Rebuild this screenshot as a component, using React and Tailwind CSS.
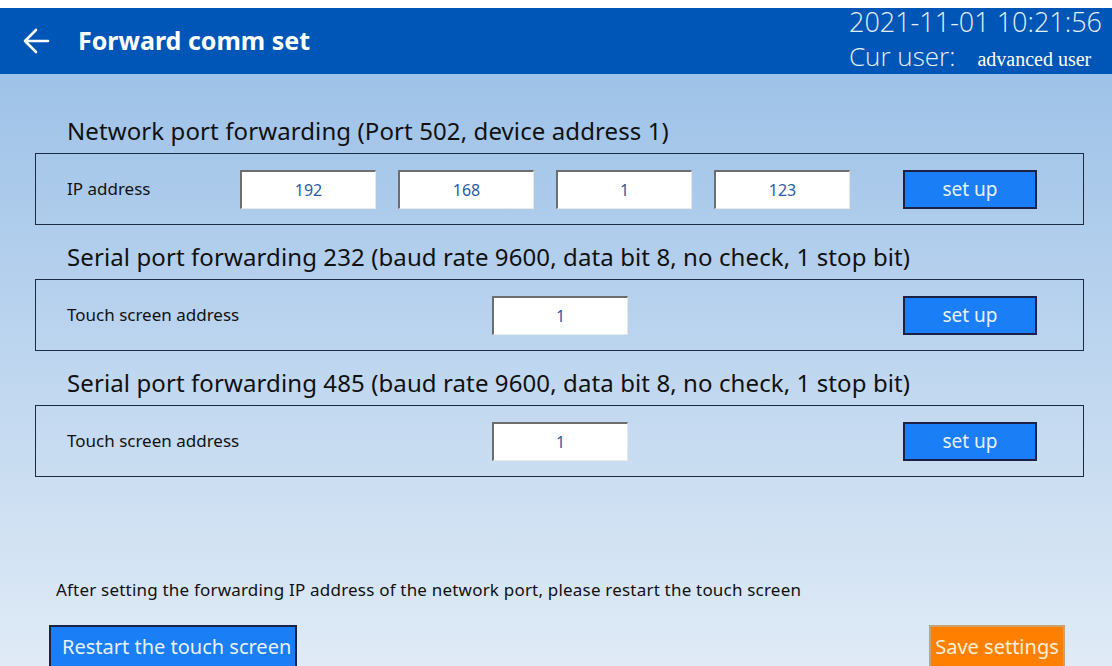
import React, { useState } from 'react';

const font = { fontFamily: '"Noto Sans", "Open Sans", sans-serif' };
const light = { fontFamily: '"Open Sans", sans-serif' };

// sunken white field used for every address cell
const Field = ({ value, className = '' }) => (
  <div
    className={`h-[39px] bg-white border-t-2 border-l-2 border-t-[#6e6e6e] border-l-[#6e6e6e] border-b border-r border-b-[#e8e8e8] border-r-[#e8e8e8] flex items-center justify-center text-[16px] text-[#2a5ba8] ${className}`}
  >
    {value}
  </div>
);

const SetUpButton = ({ onClick }) => (
  <button
    onClick={onClick}
    className="w-[134px] h-[39px] bg-[#1a7ef6] border-2 border-[#1b2246] text-[19px] text-[#e8f1ff] flex items-center justify-center"
  >
    set up
  </button>
);

const Section = ({ title, children }) => (
  <>
    <div className="h-[30px] pl-[32px] flex items-center text-[24px] tracking-[0.1px] text-[#111] whitespace-nowrap">{title}</div>
    <div className="mt-[7px] h-[72px] border border-[#1d2a44] flex items-center pl-[31px]">
      {children}
    </div>
  </>
);

const App = () => {
  const [ip] = useState(['192', '168', '1', '123']);
  const [serial232] = useState('1');
  const [serial485] = useState('1');

  return (
    <div className="w-[1112px] h-[666px] bg-white pt-[8px] flex flex-col overflow-hidden" style={font}>
      {/* title bar */}
      <div className="shrink-0 h-[66px] bg-[#0056b7] flex items-center">
        <svg width="30" height="30" viewBox="0 0 30 30" className="ml-[21px]">
          <path d="M27 15H4M15 4L4 15l11 11" fill="none" stroke="white" strokeWidth="2.6" strokeLinecap="round" strokeLinejoin="round" />
        </svg>
        <div className="ml-[27px] text-[25px] font-bold text-white">Forward comm set</div>
        <div className="ml-auto mr-[10px] self-stretch flex flex-col items-start gap-[5px] text-[#e6eefa]">
          <div className="h-[28px] leading-[28px] text-[27px] font-light" style={light}>
            2021-11-01 10:21:56
          </div>
          <div className="h-[30px] flex items-baseline">
            <span className="leading-[30px] text-[26px] font-light" style={light}>Cur user:</span>
            <span className="ml-[22px] leading-[30px] text-[20px] text-white" style={{ fontFamily: '"Liberation Serif", serif' }}>
              advanced user
            </span>
          </div>
        </div>
      </div>

      {/* body */}
      <div className="flex-1 bg-gradient-to-b from-[#9ec2e8] to-[#e0ebf6] px-[35px] pt-[42px] flex flex-col">
        <div className="w-[1049px] flex flex-col">
          <Section title="Network port forwarding (Port 502, device address 1)">
            <div className="w-[173px] text-[17px] text-[#111]">IP address</div>
            <div className="flex gap-[22px]">
              {ip.map((v, i) => (
                <Field key={i} value={v} className="w-[136px]" />
              ))}
            </div>
            <div className="ml-auto mr-[46px]">
              <SetUpButton />
            </div>
          </Section>

          <div className="mt-[17px]" />
          <Section title="Serial port forwarding 232 (baud rate 9600, data bit 8, no check, 1 stop bit)">
            <div className="w-[425px] text-[17px] text-[#111]">Touch screen address</div>
            <Field value={serial232} className="w-[136px]" />
            <div className="ml-auto mr-[46px]">
              <SetUpButton />
            </div>
          </Section>

          <div className="mt-[17px]" />
          <Section title="Serial port forwarding 485 (baud rate 9600, data bit 8, no check, 1 stop bit)">
            <div className="w-[425px] text-[17px] text-[#111]">Touch screen address</div>
            <Field value={serial485} className="w-[136px]" />
            <div className="ml-auto mr-[46px]">
              <SetUpButton />
            </div>
          </Section>
        </div>

        <div className="mt-[100px] ml-[21px] text-[17px] tracking-[0.2px] text-[#111]">
          After setting the forwarding IP address of the network port, please restart the touch screen
        </div>

        <div className="mt-[22px] flex items-start">
          <button className="ml-[14px] w-[248px] h-[44px] bg-[#1a7ef6] border-2 border-[#1b2246] text-[20px] text-[#e8f1ff] text-left pl-[11px]">
            Restart the touch screen
          </button>
          <button className="ml-auto mr-[12px] w-[136px] h-[44px] bg-[#ff8000] border-2 border-[#c9a173] text-[20px] text-[#fff0dc]">
            Save settings
          </button>
        </div>
      </div>
    </div>
  );
};

export default App;
